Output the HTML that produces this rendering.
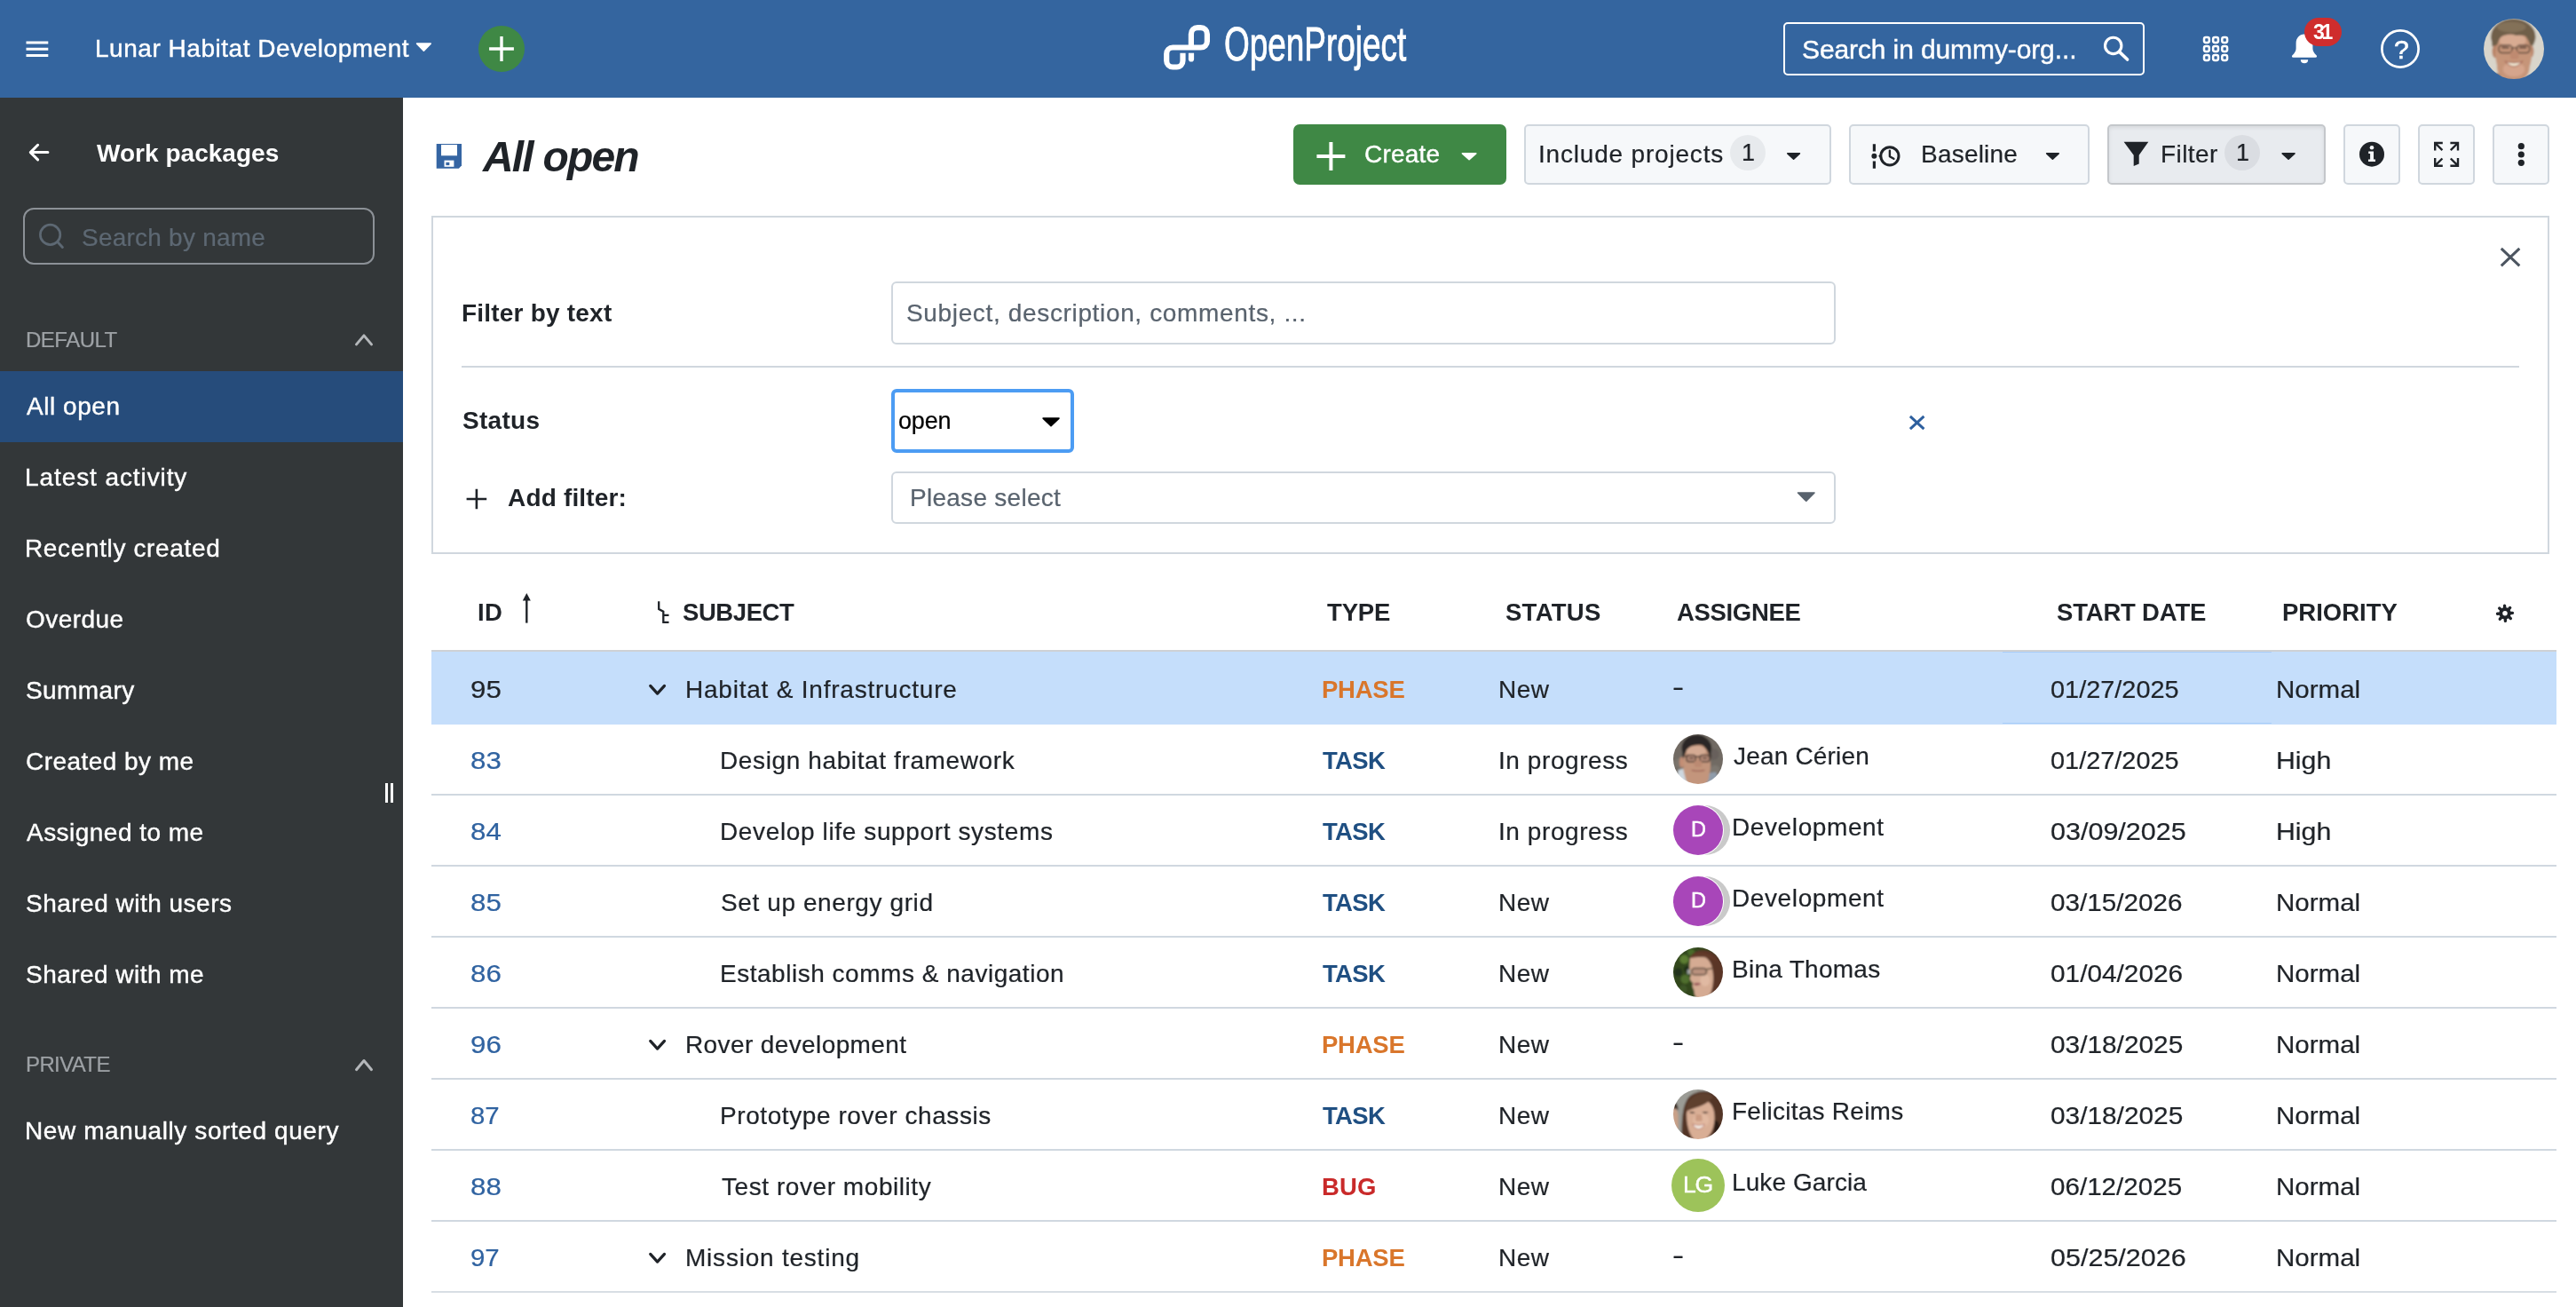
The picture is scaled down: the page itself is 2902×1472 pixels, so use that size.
<!DOCTYPE html>
<html lang="en"><head><meta charset="utf-8"><title>All open | Work packages | Lunar Habitat Development | OpenProject</title>
<style>
html,body{margin:0;padding:0;background:#fff}
body{width:2902px;height:1472px;overflow:hidden;position:relative;font-family:"Liberation Sans",sans-serif;color:#1f2328}
.t{will-change:transform;position:absolute;white-space:nowrap;line-height:1;margin:0;padding:0;text-decoration:none;display:block;font-weight:400;-webkit-text-stroke-width:.22px}
.b{position:absolute;box-sizing:border-box}
.i{position:absolute;overflow:visible}
.btn{border:2px solid #d0d7de;border-radius:5px;background:#f6f8fa}
.line{position:absolute;height:2px;background:#d0d8e0}
</style></head><body>
<header>
<div class="b" style="left:0.0px;top:0.0px;width:2902.0px;height:110.0px;background:#34659f"></div>
<svg class="i" style="left:28px;top:44px" width="28" height="22" viewBox="28 44 28 22" ><path d="M29.5 48.1H54.3M29.5 55.3H54.3M29.5 62.5H54.3" stroke="#fff" stroke-width="3" fill="none"/></svg>
<span class="t" style="left:107.2px;top:41.2px;font-size:28px;letter-spacing:0.53px;color:#ffffff;-webkit-text-stroke:0.4px #fff;">Lunar Habitat Development</span>
<svg class="i" style="left:466px;top:46px" width="23" height="15" viewBox="466 46 23 15" ><path d="M469.6 49.1H485.2L477.4 57.2Z" fill="#fff" stroke="#fff" stroke-width="1.6" stroke-linejoin="round"/></svg>
<div class="b" style="left:539.0px;top:29.0px;width:52.0px;height:52.0px;background:#3f8845;border-radius:50%"></div>
<svg class="i" style="left:549px;top:39px" width="33" height="33" viewBox="549 39 33 33" ><path d="M551.1 55H578.9M565 41.1V68.9" fill="none" stroke="#fff" stroke-width="3.4"/></svg>
<svg class="i" style="left:1308px;top:24px;will-change:transform" width="280" height="58" viewBox="1308 24 280 58" ><path d="M1332.5 59.7V68.2C1332.5 72.4 1329.6 75.5 1325.6 75.5H1321.2C1317.2 75.5 1314.2 72.4 1314.2 68.4V60.6C1314.2 56.6 1317.2 53.5 1321.2 53.5H1352.6C1356.8 53.5 1359.9 50.4 1359.9 46.4V38.4C1359.9 34.3 1356.8 31.1 1352.6 31.1H1349.2C1345 31.1 1341.9 34.3 1341.9 38.4V53" fill="none" stroke="#fff" stroke-width="6.2" stroke-linecap="butt" stroke-linejoin="round"/><path d="M1342 59.7V66.4" fill="none" stroke="#fff" stroke-width="6.2"/><circle cx="1342" cy="66.4" r="3.1" fill="#fff"/><text x="1378.9" y="67.8" font-family="Liberation Sans, sans-serif" font-size="54" fill="#fff" stroke="#fff" stroke-width="0.9" textLength="205.4" lengthAdjust="spacingAndGlyphs">OpenProject</text></svg>
<div class="b" style="left:2009.0px;top:25.0px;width:407.0px;height:60.0px;border:2px solid #fff;border-radius:5px"></div>
<span class="t" style="left:2030.4px;top:40.5px;font-size:30px;letter-spacing:-0.11px;color:#ffffff;-webkit-text-stroke:0.4px #fff;">Search in dummy-org...</span>
<svg class="i" style="left:2366px;top:38px" width="36" height="34" viewBox="2366 38 36 34" ><circle cx="2380.7" cy="51.4" r="9.2" fill="none" stroke="#fff" stroke-width="3.1"/><path d="M2387.6 58.4L2396.6 67" stroke="#fff" stroke-width="3.6" stroke-linecap="round"/></svg>
<svg class="i" style="left:2480px;top:39px" width="32" height="32" viewBox="2480 39 32 32" ><rect x="2483.00" y="42.10" width="5.8" height="5.8" rx="1.9" fill="none" stroke="#fff" stroke-width="2.5"/><rect x="2483.00" y="52.10" width="5.8" height="5.8" rx="1.9" fill="none" stroke="#fff" stroke-width="2.5"/><rect x="2483.00" y="62.10" width="5.8" height="5.8" rx="1.9" fill="none" stroke="#fff" stroke-width="2.5"/><rect x="2493.15" y="42.10" width="5.8" height="5.8" rx="1.9" fill="none" stroke="#fff" stroke-width="2.5"/><rect x="2493.15" y="52.10" width="5.8" height="5.8" rx="1.9" fill="none" stroke="#fff" stroke-width="2.5"/><rect x="2493.15" y="62.10" width="5.8" height="5.8" rx="1.9" fill="none" stroke="#fff" stroke-width="2.5"/><rect x="2503.30" y="42.10" width="5.8" height="5.8" rx="1.9" fill="none" stroke="#fff" stroke-width="2.5"/><rect x="2503.30" y="52.10" width="5.8" height="5.8" rx="1.9" fill="none" stroke="#fff" stroke-width="2.5"/><rect x="2503.30" y="62.10" width="5.8" height="5.8" rx="1.9" fill="none" stroke="#fff" stroke-width="2.5"/></svg>
<svg class="i" style="left:2580px;top:36px" width="34" height="38" viewBox="2580 36 34 38" ><path d="M2596 38.5C2590.3 38.5 2586.6 42.9 2586.6 48.6V54.5C2586.6 57.6 2585 59.7 2582.5 62.2C2581.4 63.3 2582 64.8 2583.5 64.8H2608.5C2610 64.8 2610.6 63.3 2609.5 62.2C2607 59.7 2605.4 57.6 2605.4 54.5V48.6C2605.4 42.9 2601.7 38.5 2596 38.5Z" fill="#fff"/><path d="M2591.8 67.2H2600.2A4.2 4 0 0 1 2591.8 67.2Z" fill="#fff"/></svg>
<div class="b" style="left:2596.0px;top:20.1px;width:42.0px;height:31.9px;background:#cf2d2d;border-radius:16px"></div>
<span class="t" style="left:2605.6px;top:24.8px;font-size:23px;font-weight:700;-webkit-text-stroke-width:0;letter-spacing:-3.19px;color:#ffffff;">31</span>
<svg class="i" style="left:2680px;top:31px" width="48" height="48" viewBox="2680 31 48 48" ><circle cx="2704" cy="55" r="20.6" fill="none" stroke="#fff" stroke-width="2.7"/></svg>
<span class="t" style="left:2697.0px;top:41.4px;font-size:30px;color:#ffffff;-webkit-text-stroke:0.6px #fff;">?</span>
<svg class="i" style="left:2798.0px;top:20.9px" width="68" height="68" viewBox="-50 -50 100 100"><defs><clipPath id="c1"><circle cx="0" cy="0" r="50"/></clipPath><filter id="f1" x="-20%" y="-20%" width="140%" height="140%"><feGaussianBlur stdDeviation="1.3"/></filter></defs><g clip-path="url(#c1)"><g filter="url(#f1)"><rect x="-60" y="-60" width="120" height="120" fill="#d9d5cb"/><path d="M-34 50L-30 40L-18 46L-14 60H-40Z" fill="#23262e"/><path d="M-27 44L-16 50L-10 60H-24Z" fill="#f2f2f2"/><path d="M24 50L34 42L44 60H20Z" fill="#23262e"/><ellipse cx="-1" cy="-20" rx="37" ry="30" fill="#6f5e4a"/><ellipse cx="-31" cy="4" rx="5" ry="11" fill="#b98468"/><ellipse cx="29" cy="4" rx="4" ry="10" fill="#b98468"/><ellipse cx="-0.5" cy="10" rx="30" ry="41" fill="#c69579"/><ellipse cx="-1" cy="30" rx="27" ry="26" fill="#c69579"/><ellipse cx="-2" cy="-14" rx="22" ry="12" fill="#d8ab92"/><ellipse cx="0" cy="34" rx="18" ry="12" fill="#d5a58c"/><path d="M-36 -4C-38 -30 -22 -36 -8 -32C4 -36 26 -34 33 -6C28 -20 18 -24 4 -22C-8 -26 -26 -24 -30 -6Z" fill="#6f5e4a"/><ellipse cx="-4" cy="-36" rx="24" ry="9" fill="#837159"/><rect x="-25" y="-6" width="22" height="12.5" rx="5" fill="none" stroke="#5b463a" stroke-width="2.2"/><rect x="5" y="-6" width="21" height="12.5" rx="5" fill="none" stroke="#5b463a" stroke-width="2.2"/><path d="M-3 -2H5" stroke="#5b463a" stroke-width="2"/><path d="M-20 -2H-8M9 -2H21" stroke="#4c3b33" stroke-width="2.6"/><path d="M-5 4C-6 12 -7 15 -3 17H6C9 15 8 12 7 4Z" fill="#bf8a70"/><path d="M-14 21Q0 25 14 21Q8 29 0 29.5Q-8 29 -14 21Z" fill="#f1e8d3" stroke="#a1604f" stroke-width="1.6"/></g></g></svg>
</header>
<nav>
<div class="b" style="left:0.0px;top:110.0px;width:454.0px;height:1362.0px;background:#333739"></div>
<svg class="i" style="left:30px;top:160px" width="26" height="24" viewBox="30 160 26 24" ><path d="M34.6 171.6H53.9M42.6 163.3L34.3 171.6L42.6 179.9" fill="none" stroke="#fff" stroke-width="3" stroke-linecap="round" stroke-linejoin="round"/></svg>
<h2 class="t" style="left:109.3px;top:158.5px;font-size:28px;font-weight:700;-webkit-text-stroke-width:0;letter-spacing:0.03px;color:#ffffff;">Work packages</h2>
<div class="b" style="left:26.0px;top:234.3px;width:395.7px;height:63.5px;border:2px solid #8c9197;border-radius:12px"></div>
<svg class="i" style="left:42px;top:250px" width="32" height="32" viewBox="42 250 32 32" ><circle cx="56.6" cy="264.4" r="11.2" fill="none" stroke="#5d6873" stroke-width="2.7"/><path d="M64.8 272.6L70.4 278.4" stroke="#5d6873" stroke-width="2.9" stroke-linecap="round"/></svg>
<span class="t" style="left:92.0px;top:253.5px;font-size:28px;letter-spacing:0.23px;color:#5d6873;">Search by name</span>
<span class="t" style="left:29.0px;top:371.0px;font-size:24px;letter-spacing:-0.51px;color:#9da1a5;">DEFAULT</span>
<svg class="i" style="left:398px;top:373px" width="26" height="19" viewBox="398 373 26 19" ><path d="M401.5 387.9L410.0 377.9L418.5 387.9" fill="none" stroke="#b4b7ba" stroke-width="3" stroke-linecap="round" stroke-linejoin="round"/></svg>
<div class="b" style="left:0.0px;top:418.0px;width:454.0px;height:79.6px;background:#264c7b"></div>
<a class="t" style="left:29.6px;top:444.0px;font-size:28px;letter-spacing:0.54px;color:#ffffff;-webkit-text-stroke:0.4px #fff;">All open</a>
<a class="t" style="left:27.6px;top:524.0px;font-size:28px;letter-spacing:0.91px;color:#ffffff;-webkit-text-stroke:0.4px #fff;">Latest activity</a>
<a class="t" style="left:27.6px;top:604.0px;font-size:28px;letter-spacing:0.64px;color:#ffffff;-webkit-text-stroke:0.4px #fff;">Recently created</a>
<a class="t" style="left:28.6px;top:684.0px;font-size:28px;letter-spacing:0.46px;color:#ffffff;-webkit-text-stroke:0.4px #fff;">Overdue</a>
<a class="t" style="left:28.6px;top:764.0px;font-size:28px;letter-spacing:0.40px;color:#ffffff;-webkit-text-stroke:0.4px #fff;">Summary</a>
<a class="t" style="left:28.6px;top:844.0px;font-size:28px;letter-spacing:0.45px;color:#ffffff;-webkit-text-stroke:0.4px #fff;">Created by me</a>
<a class="t" style="left:29.6px;top:924.0px;font-size:28px;letter-spacing:0.47px;color:#ffffff;-webkit-text-stroke:0.4px #fff;">Assigned to me</a>
<a class="t" style="left:28.6px;top:1004.0px;font-size:28px;letter-spacing:0.49px;color:#ffffff;-webkit-text-stroke:0.4px #fff;">Shared with users</a>
<a class="t" style="left:28.6px;top:1084.0px;font-size:28px;letter-spacing:0.46px;color:#ffffff;-webkit-text-stroke:0.4px #fff;">Shared with me</a>
<span class="t" style="left:29.0px;top:1186.9px;font-size:24px;letter-spacing:-0.62px;color:#9da1a5;">PRIVATE</span>
<svg class="i" style="left:398px;top:1190px" width="26" height="19" viewBox="398 1190 26 19" ><path d="M401.5 1204.7L410.0 1194.5L418.5 1204.7" fill="none" stroke="#b4b7ba" stroke-width="3" stroke-linecap="round" stroke-linejoin="round"/></svg>
<a class="t" style="left:27.6px;top:1259.9px;font-size:28px;letter-spacing:0.59px;color:#ffffff;-webkit-text-stroke:0.4px #fff;">New manually sorted query</a>
<div class="b" style="left:433.8px;top:882.2px;width:3.2px;height:21.6px;background:#fff"></div>
<div class="b" style="left:439.8px;top:882.2px;width:3.2px;height:21.6px;background:#fff"></div>
</nav>
<main>
<svg class="i" style="left:490px;top:160px" width="32" height="32" viewBox="490 160 32 32" ><path d="M491.7 162H520V186.6L516.8 189.8H491.7Z" fill="#3565a3"/><rect x="497" y="163" width="18" height="12.3" fill="#fff"/><rect x="500.5" y="180.6" width="10.9" height="7.2" fill="#fff"/><rect x="502.4" y="182.8" width="3.9" height="3.3" fill="#3565a3"/></svg>
<h1 class="t" style="left:543.7px;top:153.4px;font-size:48px;font-weight:700;-webkit-text-stroke-width:0;font-style:italic;letter-spacing:-1.82px;">All open</h1>
<div class="b" style="left:1456.9px;top:140.1px;width:239.9px;height:67.6px;background:#3f8845;border-radius:7px"></div>
<svg class="i" style="left:1481px;top:158px" width="38" height="38" viewBox="1481 158 38 38" ><path d="M1483.4 176.1H1515.4M1499.4 160.1V192.1" fill="none" stroke="#fff" stroke-width="4"/></svg>
<span class="t" style="left:1537.0px;top:160.0px;font-size:28px;letter-spacing:0.21px;color:#ffffff;-webkit-text-stroke:0.4px #fff;">Create</span>
<svg class="i" style="left:1644px;top:170px" width="23" height="14" viewBox="1644 170 23 14" ><path d="M1647.4 172.8H1662.8L1655.1 179.7Z" fill="#fff" stroke="#fff" stroke-width="1.6" stroke-linejoin="round"/></svg>
<div class="b btn" style="left:1717.0px;top:140.1px;width:345.6px;height:67.6px;"></div>
<span class="t" style="left:1732.9px;top:160.0px;font-size:28px;letter-spacing:0.81px;">Include projects</span>
<div class="b" style="left:1948.8px;top:151.7px;width:40.0px;height:40.0px;background:#e7eaed;border-radius:50%"></div>
<span class="t" style="left:1962.4px;top:159.0px;font-size:27px;">1</span>
<svg class="i" style="left:2010px;top:170px" width="21" height="14" viewBox="2010 170 21 14" ><path d="M2013.8 172.8H2027.4L2020.6 179.2Z" fill="#1f2328" stroke="#1f2328" stroke-width="1.6" stroke-linejoin="round"/></svg>
<div class="b btn" style="left:2083.3px;top:140.1px;width:270.3px;height:67.6px;"></div>
<svg class="i" style="left:2106px;top:160px" width="38" height="32" viewBox="2106 160 38 32" ><path d="M2111.4 162.3V170.4M2111.4 181.4V189.8" stroke="#1f2328" stroke-width="3.2" fill="none"/><circle cx="2111.4" cy="175.8" r="3" fill="#1f2328"/><path d="M2116 175.8L2120 172.4V179.2Z" fill="#1f2328"/><circle cx="2128.9" cy="175.8" r="10.1" fill="none" stroke="#1f2328" stroke-width="3"/><path d="M2128.9 169.6V176.2L2133.4 178.8" fill="none" stroke="#1f2328" stroke-width="2.4" stroke-linecap="round" stroke-linejoin="round"/></svg>
<span class="t" style="left:2163.6px;top:160.0px;font-size:28px;letter-spacing:0.21px;">Baseline</span>
<svg class="i" style="left:2302px;top:170px" width="21" height="14" viewBox="2302 170 21 14" ><path d="M2305.7 172.8H2319.2L2312.4 179.2Z" fill="#1f2328" stroke="#1f2328" stroke-width="1.6" stroke-linejoin="round"/></svg>
<div class="b btn" style="left:2374.3px;top:140.1px;width:245.4px;height:67.6px;background:#e8ebef;border-color:#c4c7cb;box-shadow:inset 0 2px 4px rgba(0,0,0,.08)"></div>
<svg class="i" style="left:2390px;top:157px" width="34" height="34" viewBox="2390 157 34 34" ><path d="M2392.6 159.8H2420.3L2409.7 174.8V184.6L2403.7 187V174.8Z" fill="#1f2328"/></svg>
<span class="t" style="left:2433.5px;top:160.0px;font-size:28px;letter-spacing:0.42px;">Filter</span>
<div class="b" style="left:2506.0px;top:152.0px;width:40.0px;height:40.0px;background:#dadde2;border-radius:50%"></div>
<span class="t" style="left:2518.8px;top:159.0px;font-size:27px;">1</span>
<svg class="i" style="left:2568px;top:170px" width="21" height="14" viewBox="2568 170 21 14" ><path d="M2571.2 172.8H2585.0L2578.1 179.2Z" fill="#1f2328" stroke="#1f2328" stroke-width="1.6" stroke-linejoin="round"/></svg>
<div class="b btn" style="left:2640.3px;top:140.1px;width:63.4px;height:67.6px;"></div>
<svg class="i" style="left:2656px;top:158px" width="32" height="32" viewBox="2656 158 32 32" ><circle cx="2672" cy="173.7" r="14" fill="#1f2328"/><circle cx="2672" cy="166.2" r="2.3" fill="#f6f8fa"/><path d="M2668.2 170.6H2674V179.6H2676V182H2668V179.6H2670.1V173H2668.2Z" fill="#f6f8fa"/></svg>
<div class="b btn" style="left:2724.0px;top:140.1px;width:63.7px;height:67.6px;"></div>
<svg class="i" style="left:2740px;top:158px" width="32" height="32" viewBox="2740 158 32 32" ><path d="M2743.2 169.6V161H2751.8M2743.2 161L2751.4 169.2M2769 169.6V161H2760.4M2769 161L2760.8 169.2M2743.2 178.1V186.7H2751.8M2743.2 186.7L2751.4 178.5M2769 178.1V186.7H2760.4M2769 186.7L2760.8 178.5" fill="none" stroke="#1f2328" stroke-width="2.4" stroke-linejoin="miter"/></svg>
<div class="b btn" style="left:2808.2px;top:140.1px;width:63.5px;height:67.6px;"></div>
<svg class="i" style="left:2834px;top:160px" width="12" height="28" viewBox="2834 160 12 28" ><circle cx="2840.3" cy="164.7" r="3.6" fill="#1f2328"/><circle cx="2840.3" cy="174" r="3.6" fill="#1f2328"/><circle cx="2840.3" cy="183.3" r="3.6" fill="#1f2328"/></svg>
<div class="b" style="left:486.0px;top:243.0px;width:2386.0px;height:381.0px;border:2px solid #d0d7de;background:#fff"></div>
<svg class="i" style="left:2814px;top:276px" width="28" height="27" viewBox="2814 276 28 27" ><path d="M2817.8 279.9L2838.3 299.3M2838.3 279.9L2817.8 299.3" fill="none" stroke="#4c5560" stroke-width="3" stroke-linecap="butt"/></svg>
<label class="t" style="left:519.6px;top:338.9px;font-size:28px;font-weight:700;-webkit-text-stroke-width:0;letter-spacing:0.21px;">Filter by text</label>
<div class="b" style="left:1004.0px;top:317.0px;width:1063.6px;height:71.0px;border:2px solid #d0d7de;border-radius:6px;background:#fff"></div>
<span class="t" style="left:1021.2px;top:338.9px;font-size:28px;letter-spacing:0.65px;color:#59636e;">Subject, description, comments, ...</span>
<div class="b" style="left:520.0px;top:412.0px;width:2318.0px;height:2.0px;background:#d0d7de"></div>
<label class="t" style="left:520.6px;top:460.3px;font-size:28px;font-weight:700;-webkit-text-stroke-width:0;letter-spacing:0.28px;">Status</label>
<div class="b" style="left:1004.0px;top:438.0px;width:206.0px;height:72.0px;border:4px solid #4c9cf3;border-radius:6px;background:#fff"></div>
<span class="t" style="left:1011.6px;top:461.1px;font-size:27px;letter-spacing:-0.15px;color:#000000;">open</span>
<svg class="i" style="left:1172px;top:468px" width="25" height="16" viewBox="1172 468 25 16" ><path d="M1175.1 471.1H1193.0L1184.0 479.7Z" fill="#000" stroke="#000" stroke-width="1.6" stroke-linejoin="round"/></svg>
<svg class="i" style="left:2148px;top:465px" width="23" height="22" viewBox="2148 465 23 22" ><path d="M2151.9 468.9L2167.4 483.2M2167.4 468.9L2151.9 483.2" fill="none" stroke="#2d5f9e" stroke-width="3" stroke-linecap="butt"/></svg>
<svg class="i" style="left:523px;top:548px" width="28" height="28" viewBox="523 548 28 28" ><path d="M525.6 562H548.2M536.9 550.7V573.3" fill="none" stroke="#1f2328" stroke-width="2.6"/></svg>
<label class="t" style="left:572.4px;top:546.5px;font-size:28px;font-weight:700;-webkit-text-stroke-width:0;letter-spacing:0.17px;">Add filter:</label>
<div class="b" style="left:1004.0px;top:531.0px;width:1063.6px;height:59.0px;border:2px solid #d0d7de;border-radius:6px;background:#fff"></div>
<span class="t" style="left:1025.1px;top:546.5px;font-size:28px;letter-spacing:0.27px;color:#59636e;">Please select</span>
<svg class="i" style="left:2022px;top:552px" width="26" height="16" viewBox="2022 552 26 16" ><path d="M2025.5 555.0H2044.0L2034.8 564.3Z" fill="#59636e" stroke="#59636e" stroke-width="1.6" stroke-linejoin="round"/></svg>
<span class="t" style="left:538.1px;top:675.7px;font-size:27.5px;font-weight:700;-webkit-text-stroke-width:0;letter-spacing:0.46px;">ID</span>
<span class="t" style="left:769.4px;top:675.7px;font-size:27.5px;font-weight:700;-webkit-text-stroke-width:0;letter-spacing:-0.43px;">SUBJECT</span>
<span class="t" style="left:1495.0px;top:675.7px;font-size:27.5px;font-weight:700;-webkit-text-stroke-width:0;letter-spacing:-0.16px;">TYPE</span>
<span class="t" style="left:1695.5px;top:675.7px;font-size:27.5px;font-weight:700;-webkit-text-stroke-width:0;letter-spacing:0.28px;">STATUS</span>
<span class="t" style="left:1889.3px;top:675.7px;font-size:27.5px;font-weight:700;-webkit-text-stroke-width:0;letter-spacing:-0.33px;">ASSIGNEE</span>
<span class="t" style="left:2316.6px;top:675.7px;font-size:27.5px;font-weight:700;-webkit-text-stroke-width:0;letter-spacing:-0.19px;">START DATE</span>
<span class="t" style="left:2571.0px;top:675.7px;font-size:27.5px;font-weight:700;-webkit-text-stroke-width:0;">PRIORITY</span>
<svg class="i" style="left:586px;top:666px" width="14" height="38" viewBox="586 666 14 38" ><path d="M593.3 668L597.8 676.4H588.8Z" fill="#1f2328"/><path d="M593.3 675V701.6" stroke="#1f2328" stroke-width="2.4"/></svg>
<svg class="i" style="left:738px;top:675px" width="18" height="30" viewBox="738 675 18 30" ><path d="M742.2 677.2V686L747.3 688.8V701M746.2 692.8H753.5M746.2 700.8H753.5" fill="none" stroke="#1f2328" stroke-width="2.3"/></svg>
<svg class="i" style="left:2810px;top:679px" width="24" height="24" viewBox="2810 679 24 24" ><circle cx="2822.0" cy="690.8" r="4.75" fill="none" stroke="#1f2328" stroke-width="4"/><path d="M2828.39 690.47L2830.49 690.36M2826.76 695.08L2828.32 696.49M2822.33 697.19L2822.44 699.29M2817.72 695.56L2816.31 697.12M2815.61 691.13L2813.51 691.24M2817.24 686.52L2815.68 685.11M2821.67 684.41L2821.56 682.31M2826.28 686.04L2827.69 684.48" stroke="#1f2328" stroke-width="3.4" stroke-linecap="round" fill="none"/></svg>
<div class="b" style="left:485.8px;top:732.0px;width:2394.2px;height:83.6px;background:#c5defb;border-top:2px solid #ced1d4"></div>
<div class="b" style="left:2256.0px;top:734.0px;width:302.5px;height:81.0px;border-top:1.5px solid #a9cdf8;border-bottom:1.5px solid #a9cdf8"></div>
<div class="line" style="left:485.8px;top:894px;width:2394.2px"></div>
<div class="line" style="left:485.8px;top:974px;width:2394.2px"></div>
<div class="line" style="left:485.8px;top:1054px;width:2394.2px"></div>
<div class="line" style="left:485.8px;top:1134px;width:2394.2px"></div>
<div class="line" style="left:485.8px;top:1214px;width:2394.2px"></div>
<div class="line" style="left:485.8px;top:1294px;width:2394.2px"></div>
<div class="line" style="left:485.8px;top:1374px;width:2394.2px"></div>
<div class="line" style="left:485.8px;top:1454px;width:2394.2px;background:#d8dee4"></div>
<span class="t" style="left:529.9px;top:762.9px;font-size:28px;transform:scaleX(1.116);transform-origin:0 0;">95</span>
<svg class="i" style="left:729px;top:768px" width="24" height="18" viewBox="729 768 24 18" ><path d="M732.7 772.4L740.6 781.1L748.5 772.4" fill="none" stroke="#1f2328" stroke-width="3.2" stroke-linecap="round" stroke-linejoin="round"/></svg>
<span class="t" style="left:771.6px;top:762.9px;font-size:28px;letter-spacing:0.78px;">Habitat &amp; Infrastructure</span>
<span class="t" style="left:1489.0px;top:763.3px;font-size:27.5px;font-weight:700;-webkit-text-stroke-width:0;letter-spacing:-0.25px;color:#d9762b;">PHASE</span>
<span class="t" style="left:1688.0px;top:762.9px;font-size:28px;letter-spacing:0.50px;">New</span>
<span class="t" style="left:1883.8px;top:760.3px;font-size:28px;transform:scaleX(1.4);transform-origin:0 0;">-</span>
<span class="t" style="left:2310.0px;top:762.9px;font-size:28px;transform:scaleX(1.032);transform-origin:0 0;">01/27/2025</span>
<span class="t" style="left:2564.2px;top:762.9px;font-size:28px;transform:scaleX(1.054);transform-origin:0 0;">Normal</span>
<a class="t" style="left:529.9px;top:842.9px;font-size:28px;color:#2f62a0;transform:scaleX(1.116);transform-origin:0 0;">83</a>
<span class="t" style="left:811.0px;top:842.9px;font-size:28px;letter-spacing:0.62px;">Design habitat framework</span>
<span class="t" style="left:1490.0px;top:843.3px;font-size:27.5px;font-weight:700;-webkit-text-stroke-width:0;letter-spacing:-0.65px;color:#1f4f82;">TASK</span>
<span class="t" style="left:1688.0px;top:842.9px;font-size:28px;letter-spacing:0.57px;">In progress</span>
<span class="t" style="left:1952.7px;top:838.1px;font-size:28px;letter-spacing:0.18px;">Jean Cérien</span>
<span class="t" style="left:2310.0px;top:842.9px;font-size:28px;transform:scaleX(1.032);transform-origin:0 0;">01/27/2025</span>
<span class="t" style="left:2564.1px;top:842.9px;font-size:28px;transform:scaleX(1.081);transform-origin:0 0;">High</span>
<a class="t" style="left:529.9px;top:922.9px;font-size:28px;color:#2f62a0;transform:scaleX(1.116);transform-origin:0 0;">84</a>
<span class="t" style="left:811.0px;top:922.9px;font-size:28px;letter-spacing:0.63px;">Develop life support systems</span>
<span class="t" style="left:1490.0px;top:923.3px;font-size:27.5px;font-weight:700;-webkit-text-stroke-width:0;letter-spacing:-0.65px;color:#1f4f82;">TASK</span>
<span class="t" style="left:1688.0px;top:922.9px;font-size:28px;letter-spacing:0.57px;">In progress</span>
<span class="t" style="left:1950.7px;top:918.1px;font-size:28px;letter-spacing:0.61px;">Development</span>
<span class="t" style="left:2309.9px;top:922.9px;font-size:28px;transform:scaleX(1.090);transform-origin:0 0;">03/09/2025</span>
<span class="t" style="left:2564.1px;top:922.9px;font-size:28px;transform:scaleX(1.081);transform-origin:0 0;">High</span>
<a class="t" style="left:529.9px;top:1002.9px;font-size:28px;color:#2f62a0;transform:scaleX(1.116);transform-origin:0 0;">85</a>
<span class="t" style="left:812.0px;top:1002.9px;font-size:28px;letter-spacing:0.60px;">Set up energy grid</span>
<span class="t" style="left:1490.0px;top:1003.3px;font-size:27.5px;font-weight:700;-webkit-text-stroke-width:0;letter-spacing:-0.65px;color:#1f4f82;">TASK</span>
<span class="t" style="left:1688.0px;top:1002.9px;font-size:28px;letter-spacing:0.50px;">New</span>
<span class="t" style="left:1950.7px;top:998.1px;font-size:28px;letter-spacing:0.61px;">Development</span>
<span class="t" style="left:2309.9px;top:1002.9px;font-size:28px;transform:scaleX(1.060);transform-origin:0 0;">03/15/2026</span>
<span class="t" style="left:2564.2px;top:1002.9px;font-size:28px;transform:scaleX(1.054);transform-origin:0 0;">Normal</span>
<a class="t" style="left:529.9px;top:1082.9px;font-size:28px;color:#2f62a0;transform:scaleX(1.116);transform-origin:0 0;">86</a>
<span class="t" style="left:811.0px;top:1082.9px;font-size:28px;letter-spacing:0.52px;">Establish comms &amp; navigation</span>
<span class="t" style="left:1490.0px;top:1083.3px;font-size:27.5px;font-weight:700;-webkit-text-stroke-width:0;letter-spacing:-0.65px;color:#1f4f82;">TASK</span>
<span class="t" style="left:1688.0px;top:1082.9px;font-size:28px;letter-spacing:0.50px;">New</span>
<span class="t" style="left:1950.7px;top:1078.1px;font-size:28px;letter-spacing:0.27px;">Bina Thomas</span>
<span class="t" style="left:2309.9px;top:1082.9px;font-size:28px;transform:scaleX(1.064);transform-origin:0 0;">01/04/2026</span>
<span class="t" style="left:2564.2px;top:1082.9px;font-size:28px;transform:scaleX(1.054);transform-origin:0 0;">Normal</span>
<a class="t" style="left:529.9px;top:1162.9px;font-size:28px;color:#2f62a0;transform:scaleX(1.116);transform-origin:0 0;">96</a>
<svg class="i" style="left:729px;top:1168px" width="24" height="18" viewBox="729 1168 24 18" ><path d="M732.7 1172.4L740.6 1181.1L748.5 1172.4" fill="none" stroke="#1f2328" stroke-width="3.2" stroke-linecap="round" stroke-linejoin="round"/></svg>
<span class="t" style="left:771.6px;top:1162.9px;font-size:28px;letter-spacing:0.39px;">Rover development</span>
<span class="t" style="left:1489.0px;top:1163.3px;font-size:27.5px;font-weight:700;-webkit-text-stroke-width:0;letter-spacing:-0.25px;color:#d9762b;">PHASE</span>
<span class="t" style="left:1688.0px;top:1162.9px;font-size:28px;letter-spacing:0.50px;">New</span>
<span class="t" style="left:1883.8px;top:1160.3px;font-size:28px;transform:scaleX(1.4);transform-origin:0 0;">-</span>
<span class="t" style="left:2309.9px;top:1162.9px;font-size:28px;transform:scaleX(1.065);transform-origin:0 0;">03/18/2025</span>
<span class="t" style="left:2564.2px;top:1162.9px;font-size:28px;transform:scaleX(1.054);transform-origin:0 0;">Normal</span>
<a class="t" style="left:530.0px;top:1242.9px;font-size:28px;color:#2f62a0;transform:scaleX(1.048);transform-origin:0 0;">87</a>
<span class="t" style="left:811.0px;top:1242.9px;font-size:28px;letter-spacing:0.58px;">Prototype rover chassis</span>
<span class="t" style="left:1490.0px;top:1243.3px;font-size:27.5px;font-weight:700;-webkit-text-stroke-width:0;letter-spacing:-0.65px;color:#1f4f82;">TASK</span>
<span class="t" style="left:1688.0px;top:1242.9px;font-size:28px;letter-spacing:0.50px;">New</span>
<span class="t" style="left:1950.7px;top:1238.1px;font-size:28px;letter-spacing:0.24px;">Felicitas Reims</span>
<span class="t" style="left:2309.9px;top:1242.9px;font-size:28px;transform:scaleX(1.065);transform-origin:0 0;">03/18/2025</span>
<span class="t" style="left:2564.2px;top:1242.9px;font-size:28px;transform:scaleX(1.054);transform-origin:0 0;">Normal</span>
<a class="t" style="left:529.9px;top:1322.9px;font-size:28px;color:#2f62a0;transform:scaleX(1.116);transform-origin:0 0;">88</a>
<span class="t" style="left:813.0px;top:1322.9px;font-size:28px;letter-spacing:0.56px;">Test rover mobility</span>
<span class="t" style="left:1489.0px;top:1323.3px;font-size:27.5px;font-weight:700;-webkit-text-stroke-width:0;letter-spacing:0.14px;color:#c92a2a;">BUG</span>
<span class="t" style="left:1688.0px;top:1322.9px;font-size:28px;letter-spacing:0.50px;">New</span>
<span class="t" style="left:1950.7px;top:1318.1px;font-size:28px;letter-spacing:0.09px;">Luke Garcia</span>
<span class="t" style="left:2309.9px;top:1322.9px;font-size:28px;transform:scaleX(1.057);transform-origin:0 0;">06/12/2025</span>
<span class="t" style="left:2564.2px;top:1322.9px;font-size:28px;transform:scaleX(1.054);transform-origin:0 0;">Normal</span>
<a class="t" style="left:530.0px;top:1402.9px;font-size:28px;color:#2f62a0;transform:scaleX(1.048);transform-origin:0 0;">97</a>
<svg class="i" style="left:729px;top:1408px" width="24" height="18" viewBox="729 1408 24 18" ><path d="M732.7 1412.4L740.6 1421.1L748.5 1412.4" fill="none" stroke="#1f2328" stroke-width="3.2" stroke-linecap="round" stroke-linejoin="round"/></svg>
<span class="t" style="left:771.6px;top:1402.9px;font-size:28px;letter-spacing:0.78px;">Mission testing</span>
<span class="t" style="left:1489.0px;top:1403.3px;font-size:27.5px;font-weight:700;-webkit-text-stroke-width:0;letter-spacing:-0.25px;color:#d9762b;">PHASE</span>
<span class="t" style="left:1688.0px;top:1402.9px;font-size:28px;letter-spacing:0.50px;">New</span>
<span class="t" style="left:1883.8px;top:1400.3px;font-size:28px;transform:scaleX(1.4);transform-origin:0 0;">-</span>
<span class="t" style="left:2309.9px;top:1402.9px;font-size:28px;transform:scaleX(1.090);transform-origin:0 0;">05/25/2026</span>
<span class="t" style="left:2564.2px;top:1402.9px;font-size:28px;transform:scaleX(1.054);transform-origin:0 0;">Normal</span>
<svg class="i" style="left:1885.0px;top:826.9px" width="56" height="56" viewBox="-50 -50 100 100"><defs><clipPath id="c2"><circle cx="0" cy="0" r="50"/></clipPath><filter id="f2" x="-20%" y="-20%" width="140%" height="140%"><feGaussianBlur stdDeviation="1.5"/></filter></defs><g clip-path="url(#c2)"><g filter="url(#f2)"><rect x="-60" y="-60" width="120" height="120" fill="#716b64"/><circle cx="30" cy="-10" r="12" fill="#67615b"/><circle cx="-38" cy="8" r="10" fill="#7b756d"/><circle cx="34" cy="22" r="10" fill="#7d776f"/><path d="M-44 60L-40 22L-26 18L-12 60Z" fill="#cdd7df"/><path d="M12 60L18 28L36 26L46 60Z" fill="#8f9cab"/><ellipse cx="-3" cy="-22" rx="30" ry="27" fill="#2b2725"/><ellipse cx="-33" cy="6" rx="4.5" ry="11" fill="#c48e74"/><ellipse cx="-2.5" cy="12" rx="27.5" ry="44" fill="#c3957b"/><ellipse cx="-2" cy="34" rx="24" ry="22" fill="#c3957b"/><ellipse cx="-4" cy="-16" rx="20" ry="11" fill="#d4aa93"/><path d="M-31 -2C-34 -30 -18 -38 -4 -36C12 -38 28 -30 26 0C24 -16 18 -24 8 -28C-8 -30 -24 -28 -31 -2Z" fill="#2b2725"/><rect x="-23" y="-8" width="18" height="13" rx="4" fill="#b98e7a" stroke="#47372f" stroke-width="2.6"/><rect x="4" y="-8" width="19" height="13" rx="4" fill="#b98e7a" stroke="#47372f" stroke-width="2.6"/><path d="M-32 -6H-23M-5 -5H4M23 -6H27" stroke="#47372f" stroke-width="2.6"/><path d="M-18 -2H-9M9 -2H18" stroke="#3a2d29" stroke-width="2.4"/><path d="M-7 3C-8 11 -9 14 -5 16H5C9 14 8 11 7 3Z" fill="#bb8a72"/><path d="M-13 22Q0 26 13 22" stroke="#9a5d54" stroke-width="2.4" fill="none"/></g></g></svg>
<div class="b" style="left:1893.1px;top:907.0px;width:56.0px;height:56.0px;background:#c9c9c9;border-radius:50%"></div><div class="b" style="left:1883.6px;top:905.7px;width:58.6px;height:58.6px;background:#fff;border-radius:50%"></div><div class="b" style="left:1884.9px;top:907.0px;width:56.0px;height:56.0px;background:#a846b9;border-radius:50%"></div>
<div class="b" style="left:1893.1px;top:987.0px;width:56.0px;height:56.0px;background:#c9c9c9;border-radius:50%"></div><div class="b" style="left:1883.6px;top:985.7px;width:58.6px;height:58.6px;background:#fff;border-radius:50%"></div><div class="b" style="left:1884.9px;top:987.0px;width:56.0px;height:56.0px;background:#a846b9;border-radius:50%"></div>
<svg class="i" style="left:1885.0px;top:1066.9px" width="56" height="56" viewBox="-50 -50 100 100"><defs><clipPath id="c3"><circle cx="0" cy="0" r="50"/></clipPath><filter id="f3" x="-20%" y="-20%" width="140%" height="140%"><feGaussianBlur stdDeviation="1.5"/></filter></defs><g clip-path="url(#c3)"><g filter="url(#f3)"><rect x="-60" y="-60" width="120" height="120" fill="#32471f"/><circle cx="-28" cy="-26" r="9" fill="#5c7d33"/><circle cx="-40" cy="0" r="8" fill="#24331a"/><circle cx="-26" cy="14" r="9" fill="#4f6e2d"/><circle cx="-30" cy="34" r="8" fill="#3e5626"/><circle cx="-14" cy="-40" r="7" fill="#4a6a2a"/><circle cx="-22" cy="-6" r="6" fill="#1f2b16"/><path d="M-16 -30C-6 -52 40 -52 52 -10V30C50 50 30 60 6 60C24 40 30 20 28 -4C24 -22 10 -30 -16 -30Z" fill="#5a3526"/><path d="M-16 -30C-4 -40 18 -36 26 -16C32 0 32 24 26 40C22 50 12 54 2 54C-6 50 -8 44 -8 36C-12 30 -12 26 -10 22C-16 18 -18 12 -14 6C-18 0 -18 -14 -16 -30Z" fill="#d5ab93"/><ellipse cx="14" cy="16" rx="10" ry="12" fill="#e0b9a2"/><path d="M-18 -28C-8 -44 24 -46 40 -20C24 -32 4 -32 -18 -28Z" fill="#633a29"/><rect x="-13" y="-8" width="30" height="13" rx="6" fill="#b9917d" stroke="#5a4a3c" stroke-width="2.8"/><path d="M17 -6L30 -8" stroke="#6a5643" stroke-width="3"/><rect x="-22" y="-6" width="6" height="10" rx="2" fill="#9aa0a0"/><path d="M-8 22Q0 20 6 23Q0 28 -8 26Z" fill="#9b5b5c"/></g></g></svg>
<svg class="i" style="left:1885.0px;top:1226.9px" width="56" height="56" viewBox="-50 -50 100 100"><defs><clipPath id="c4"><circle cx="0" cy="0" r="50"/></clipPath><filter id="f4" x="-20%" y="-20%" width="140%" height="140%"><feGaussianBlur stdDeviation="1.5"/></filter></defs><g clip-path="url(#c4)"><g filter="url(#f4)"><rect x="-60" y="-60" width="120" height="120" fill="#9b9b95"/><path d="M-60 -14C-48 -18 -40 -10 -40 4V30H-60Z" fill="#c9a088"/><path d="M-60 -30C-46 -30 -40 -20 -40 -8C-46 -14 -52 -12 -60 -6Z" fill="#3a2a22"/><path d="M-34 60C-32 20 -34 -10 -22 -30C-10 -50 30 -54 46 -30C56 -12 54 30 50 60Z" fill="#533626"/><path d="M32 12C44 10 46 30 40 40C36 44 32 40 32 36Z" fill="#2b1d17"/><path d="M-23 -2C-22 -20 -4 -30 12 -28C28 -26 34 -8 33 10C32 30 24 46 8 54H-4C-16 46 -24 24 -23 -2Z" fill="#d9ae95"/><ellipse cx="6" cy="12" rx="16" ry="14" fill="#e2b9a1"/><path d="M30 -36C22 -20 2 -16 -24 -6C-26 -24 -10 -42 10 -43C18 -43 26 -41 30 -36Z" fill="#5e3f2e"/><path d="M-18 -4Q-12 -7 -6 -3Q-12 0 -18 -4ZM8 -4Q14 -7 21 -4Q14 0 8 -4Z" fill="#3f2f2a"/><path d="M-4 0C-5 8 -7 12 -3 14H7C10 12 8 8 7 0Z" fill="#cb9b82"/><path d="M-11 20Q2 24 13 20Q9 29 1 29.5Q-7 29 -11 20Z" fill="#f5efe6" stroke="#b46c62" stroke-width="1.6"/></g></g></svg>
<div class="b" style="left:1882.9px;top:1304.9px;width:60.0px;height:60.0px;background:#9dc35a;border-radius:50%"></div>
<span class="t" style="left:1904.5px;top:923.1px;font-size:23.5px;color:#ffffff;-webkit-text-stroke:0.45px #fff;">D</span>
<span class="t" style="left:1904.5px;top:1003.1px;font-size:23.5px;color:#ffffff;-webkit-text-stroke:0.45px #fff;">D</span>
<span class="t" style="left:1896.4px;top:1320.9px;font-size:26.5px;letter-spacing:-1.14px;color:#ffffff;-webkit-text-stroke:0.45px #fff;">LG</span>
</main>
</body></html>
